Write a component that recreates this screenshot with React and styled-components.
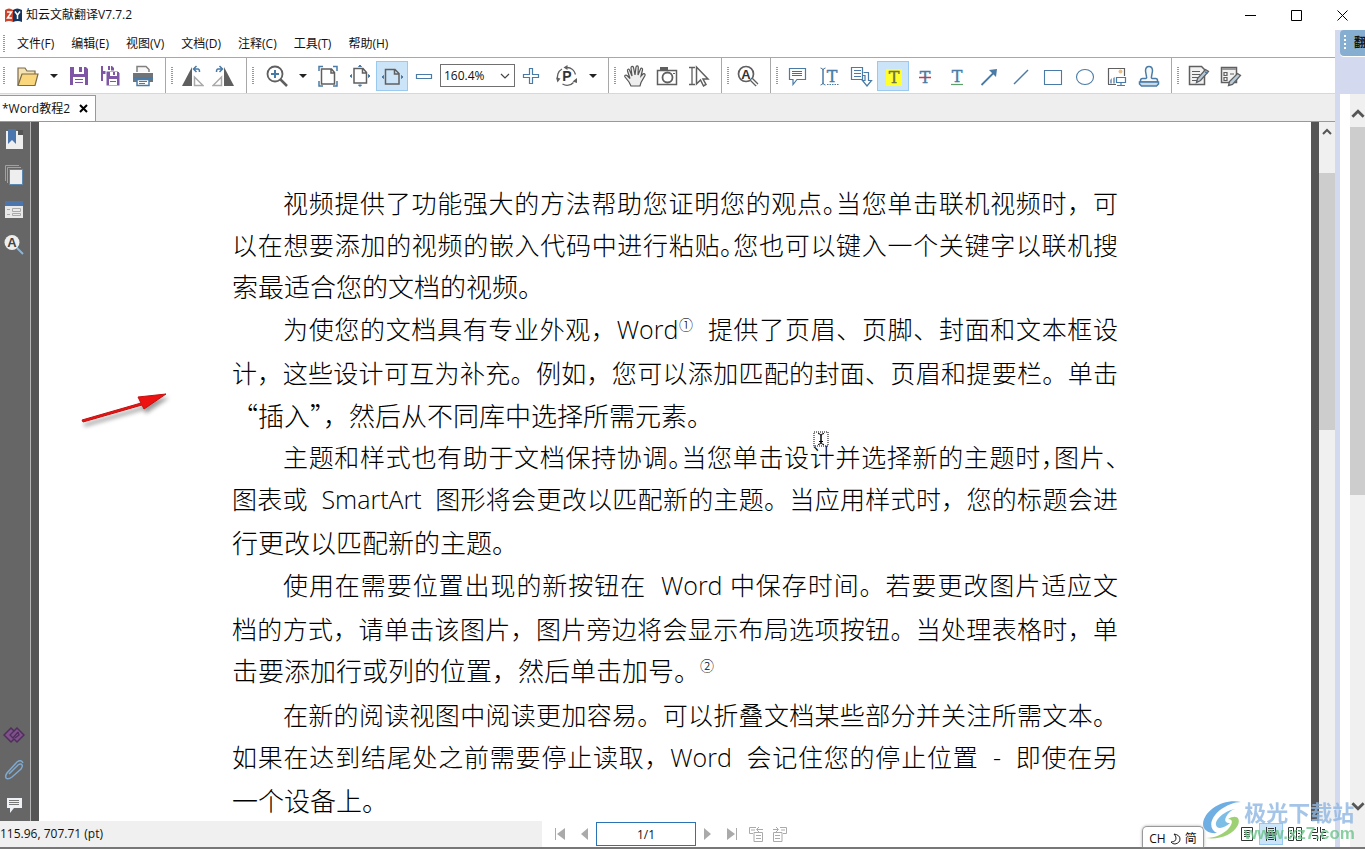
import React, { useState } from "react";
import styled, { createGlobalStyle, css } from "styled-components";

const GRAY = "#5f5f5f";
const BLUE = "#4a7ba6";
const PURPLE = "#7f56a6";

const menus = [
  "文件(F)",
  "编辑(E)",
  "视图(V)",
  "文档(D)",
  "注释(C)",
  "工具(T)",
  "帮助(H)",
];

const Icon = ({ size = 24, children }) => (
  <svg
    width={size}
    height={size}
    viewBox={`0 0 ${size} ${size}`}
    fill="none"
    stroke={GRAY}
    strokeWidth="1.5"
    aria-hidden="true"
  >
    {children}
  </svg>
);

const Letter = ({ x, y, size = 16, color = BLUE, sans, children }) => (
  <text
    x={x}
    y={y}
    fontSize={size}
    fontWeight={sans ? "bold" : "normal"}
    textAnchor="middle"
    fill={color}
    stroke={sans ? "none" : color}
    strokeWidth="0.4"
    fontFamily={sans ? '"Liberation Sans", sans-serif' : '"DejaVu Serif", serif'}
  >
    {children}
  </text>
);

const icons = {
  open: (
    <Icon>
      <path d="M2 21V4h7l2 3h8v3" fill="#f5e3b3" stroke="#7a6a4a" strokeWidth="1.2" />
      <path d="M2 21.500L6 10h16l-3 11.500z" fill="#fad67c" stroke="#7a6a4a" strokeWidth="1.2" />
    </Icon>
  ),
  save: (
    <Icon>
      <path d="M3 3h16l2 2v16H3z" fill={PURPLE} stroke="none" />
      <path d="M7 3h10v7H7zM6 13h12v8H6z" fill="#fff" stroke="none" />
      <path d="M12 3h3v5h-3zM8 15h8v1H8zM8 18h8v1H8z" fill={PURPLE} stroke="none" />
    </Icon>
  ),
  saveAll: (
    <Icon>
      <path d="M2 2h11l2 2v13H2z" fill={PURPLE} stroke="none" />
      <path d="M4 2h8v5H4zM4 10h5v7H4z" fill="#fff" stroke="none" />
      <path d="M9 2h2v4H9z" fill={PURPLE} stroke="none" />
      <path d="M7 7h12l2 2v13H7z" fill={PURPLE} stroke="#fff" strokeWidth="1" />
      <path d="M11 8h7v4h-7zM10 15h8v6h-8z" fill="#fff" stroke="none" />
      <path d="M14 8h2v3h-2zM11 17h6v1h-6z" fill={PURPLE} stroke="none" />
    </Icon>
  ),
  print: (
    <Icon>
      <path d="M6 8V2.500h9l3 3V8" fill="#f7f7f7" stroke="#808080" />
      <path d="M2 9h20v9H2z" fill="#707378" stroke="none" />
      <path d="M2 13h20v2H2z" fill={BLUE} stroke="none" />
      <path d="M6 15.500h12v6H6z" fill="#fff" stroke={BLUE} />
      <path d="M8 17.500h8M8 19.500h6" stroke={BLUE} strokeWidth="1" />
    </Icon>
  ),
  rotateLeft: (
    <Icon>
      <path d="M2 22L12 3v19z" fill={GRAY} stroke="none" />
      <path d="M14.500 13v8.500H23z" stroke="#aaa" />
      <path d="M14 5h4q1.500 0 1.500 3M16.500 2L13.500 5l3 3" stroke={BLUE} />
    </Icon>
  ),
  rotateRight: (
    <Icon>
      <path d="M22 22L12 3v19z" fill={GRAY} stroke="none" />
      <path d="M9.500 13v8.500H1z" stroke="#aaa" />
      <path d="M10 5H6Q4.500 5 4.500 8M7.500 2l3 3-3 3" stroke={BLUE} />
    </Icon>
  ),
  zoom: (
    <Icon>
      <circle cx="10" cy="10" r="7.500" strokeWidth="1.800" />
      <path d="M15.500 15.500L22 22" strokeWidth="2.500" />
      <path d="M10 6v8M6 10h8" stroke={BLUE} strokeWidth="2" />
    </Icon>
  ),
  actualSize: (
    <Icon>
      <path d="M5.500 5h10l3 3.500V20h-13zM15 5v4h4" />
      <path d="M3 7V2.500h4M17 2.500h4V7M21 17v5h-4M7 22H3v-5" stroke={BLUE} />
    </Icon>
  ),
  fitPage: (
    <Icon>
      <path d="M6 4.500h9l3.500 4V19H6zM14.500 5v4H18" />
      <path
        d="M10.500 2.500l1.500-1.500 1.500 1.500zM10.500 21l1.500 1.500 1.500-1.500zM3.500 10.500L2 12l1.500 1.500zM20.500 10.500L22 12l-1.500 1.500z"
        fill={BLUE}
        stroke={BLUE}
        strokeWidth="1"
      />
    </Icon>
  ),
  fitWidth: (
    <Icon>
      <path d="M5.500 5.500h9.500l4 4V20H5.500zM14.500 6v4H19" />
      <path
        d="M3.500 11.500L2 13l1.500 1.500zM21.500 11.500L23 13l-1.500 1.500z"
        fill={BLUE}
        stroke={BLUE}
        strokeWidth="1"
      />
    </Icon>
  ),
  minus: (
    <Icon>
      <path d="M4.500 10.500h15v4h-15z" stroke={BLUE} strokeWidth="1.200" />
    </Icon>
  ),
  plus: (
    <Icon>
      <path
        d="M10.500 4.500h3v6h6v3h-6v6h-3v-6h-6v-3h6z"
        stroke={BLUE}
        strokeWidth="1.200"
      />
    </Icon>
  ),
  rotatePage: (
    <Icon>
      <path d="M12 3.500a9 9 0 0 1 8.500 7M18.500 18.500a9 9 0 0 1-11 1.500M3 16a9 9 0 0 1 4-11" strokeWidth="1.300" />
      <path d="M12.500 1v5L8.500 3.500zM22 14v5l-4.500-1.500zM1 13.500l4.500 1-3 4z" fill={GRAY} stroke="none" />
      <Letter x="12" y="17" size="14" color="#333" sans>
        P
      </Letter>
    </Icon>
  ),
  hand: (
    <Icon>
      <path
        d="M8 22l-2-4-4-5c-1-1.500 1-2.500 2-1.500l3 3L4.500 7c-.5-2 1.500-2.500 2-1l2.500 6-1-8c0-2 2-2 2.500-.5L12 11l1-8c.3-1.600 2.300-1.500 2.300.3L15 11l2.500-6c.7-1.500 2.500-.8 2 1L18 12l2-2c1-1 2.500 0 2 1.500l-4 7-1 3.500z"
        fill="#eee"
        stroke="#555"
        strokeWidth="1.200"
      />
    </Icon>
  ),
  camera: (
    <Icon>
      <path d="M2.500 6.500h19v14h-19z" />
      <path d="M5 3h8v4H5zM18 9h2v1h-2z" fill={GRAY} stroke="none" />
      <circle cx="12.500" cy="13.500" r="5" strokeWidth="1.800" />
    </Icon>
  ),
  select: (
    <Icon>
      <path d="M2 3.500h6M5 4v16M2 20.500h6" strokeWidth="1.300" />
      <path d="M9.500 3v17l4-4 3 6 2.500-1.500-3-5.500h5z" fill="#fff" />
    </Icon>
  ),
  find: (
    <Icon>
      <circle cx="10" cy="10" r="7.500" strokeWidth="1.700" />
      <path d="M15.500 15.500L21 21" strokeWidth="4" />
      <path d="M15.500 15.500L21 21" stroke="#fff" strokeWidth="1.500" />
      <Letter x="10" y="15" size="13" color="#333" sans>
        A
      </Letter>
    </Icon>
  ),
  comment: (
    <Icon>
      <path d="M4.500 4.500h16v11H12l-4 5v-5H4.500z" stroke={BLUE} strokeWidth="1.200" />
      <path d="M7 7.500h10M7 9.500h10M7 11.500h10" stroke="#666" strokeWidth="1" />
    </Icon>
  ),
  textInsert: (
    <Icon>
      <path
        d="M3.500 4q2.500 0 2.500 3v11q0 3-2.500 3M8.500 4Q6 4 6 7v11q0 3 2.500 3"
        stroke={BLUE}
        strokeWidth="1"
      />
      <Letter x="15" y="18">
        T
      </Letter>
      <path d="M10 20.500h12" stroke={BLUE} strokeWidth="1.200" strokeDasharray="1.500 1" />
    </Icon>
  ),
  replace: (
    <Icon>
      <path d="M2.500 3.500h11v12h-11z" stroke={BLUE} strokeWidth="1.200" />
      <path d="M5 6.500h7M5 9.500h7M5 12.500h7" stroke={BLUE} strokeWidth="1" />
      <path
        d="M14.500 8.500h5v8h3L18 22l-4.500-5.500H16v-5h-2"
        fill="#fff"
        stroke={BLUE}
        strokeWidth="1.200"
      />
    </Icon>
  ),
  highlight: (
    <Icon>
      <path d="M5 5h16v17H5z" fill="#ffff2e" stroke="none" />
      <Letter x="13" y="19" color="#6e7047">
        T
      </Letter>
    </Icon>
  ),
  strike: (
    <Icon>
      <Letter x="12" y="19">
        T
      </Letter>
      <path d="M6 13.500h12" stroke="#d0354c" />
    </Icon>
  ),
  underline: (
    <Icon>
      <Letter x="12" y="18">
        T
      </Letter>
      <path d="M6 20.500h12" stroke="#5fa06a" strokeWidth="1.200" />
    </Icon>
  ),
  arrow: (
    <Icon>
      <path d="M4.500 21L17 8.500" stroke={BLUE} strokeWidth="1.800" />
      <path d="M12 6l8-1-1 8z" fill={BLUE} stroke="none" />
    </Icon>
  ),
  line: (
    <Icon>
      <path d="M5 20L19 6" stroke={BLUE} strokeWidth="1.500" />
    </Icon>
  ),
  rect: (
    <Icon>
      <path d="M3.500 6.500h17v14h-17z" stroke={BLUE} strokeWidth="1.100" />
    </Icon>
  ),
  ellipse: (
    <Icon>
      <ellipse cx="12" cy="13" rx="8.500" ry="7.500" stroke={BLUE} strokeWidth="1.100" />
    </Icon>
  ),
  image: (
    <Icon>
      <path d="M3.500 20V4.500h16V12M3 20.500h8" strokeWidth="1.200" />
      <circle cx="15.500" cy="7.500" r="2" fill="#e8bf85" stroke="none" />
      <path d="M5 19.500V16l2-2v5.500zM8 19.500V14l2-1v6.500z" fill="#8fa9c4" stroke="none" />
      <path d="M11.500 13.500h9v5h-9zM16 18.500v3M12 21.500h8" fill="#fff" stroke={BLUE} strokeWidth="1.200" />
    </Icon>
  ),
  stamp: (
    <Icon>
      <path
        d="M3.500 18v-1.500q0-2 2-2h3q1.500 0 1-2Q9 10 8.500 7q0-4.500 3.500-4.500T15.500 7q-.5 3-1 5.500-.5 2 1 2h3q2 0 2 2V18z"
        fill="#f4f8fb"
        stroke={BLUE}
      />
      <path d="M2.500 18h19v2l-2 2h-15l-2-2z" fill="#c9dbe8" stroke={BLUE} />
    </Icon>
  ),
  editPage: (
    <Icon>
      <path d="M3.500 2.500h12l3 3v15h-15z" fill="#f2f2f2" />
      <path d="M6 7.500h8M6 10.500h8M6 13.500h6M6 16.500h5" strokeWidth="1" />
      <path d="M10.500 18.500l1-4 8-9 3 2-8 9z" fill="#b9cbdb" strokeWidth="1.300" />
      <path d="M19 8l3 1" stroke={BLUE} />
    </Icon>
  ),
  editForm: (
    <Icon>
      <path d="M3.500 3.500h15v15h-15z" fill="#f2f2f2" />
      <path d="M4 4h14v2H4z" fill="#999" stroke="none" />
      <path d="M6 8.500h3v3H6zM6 13.500h3v3H6zM12 10h4" strokeWidth="1.200" />
      <path d="M10.500 21.500l1-4 8-8 3 2-8 9z" fill="#b9cbdb" strokeWidth="1.300" />
    </Icon>
  ),
};

const annotationTools = [
  ["comment", "附注"],
  ["textInsert", "插入文本"],
  ["replace", "替换文本"],
  ["highlight", "高亮"],
  ["strike", "删除线"],
  ["underline", "下划线"],
  ["arrow", "箭头"],
  ["line", "直线"],
  ["rect", "矩形"],
  ["ellipse", "椭圆"],
  ["image", "图像"],
  ["stamp", "图章"],
];

const sideIcons = {
  bookmark: (
    <Icon size={22}>
      <path d="M3 2h13l4 4v14H3z" fill="#eee" stroke="none" />
      <path d="M15 1h5v5h-5z" fill="#555" stroke="none" />
      <path d="M5 0h8v15l-4-4-4 4z" fill="#4a76ad" stroke="none" />
    </Icon>
  ),
  pages: (
    <Icon size={22}>
      <path d="M2.500 17V1.500H16M4.500 19V3.500H18" stroke="#85a8c6" strokeWidth="1" />
      <path d="M6.500 5.500h13v15h-13z" fill="#eee" stroke="#5c87ae" strokeWidth="1" />
    </Icon>
  ),
  form: (
    <Icon size={22}>
      <path d="M2 6h18v13H2z" fill="#e9e9e9" stroke="none" />
      <path d="M2 2h18v5H2z" fill="#4a76ad" stroke="none" />
      <path d="M4 10.500h3M4 15.500h3M9.500 9.500h8v3h-8zM9.500 14.500h8v2h-8z" stroke="#aaa" strokeWidth="1" />
    </Icon>
  ),
  search: (
    <Icon size={22}>
      <path d="M14 14l6 6" stroke="#8fb4d4" strokeWidth="2" />
      <circle cx="9" cy="8.500" r="7.500" fill="#eee" stroke="none" />
      <Letter x="9" y="13" size="13" color="#444" sans>
        A
      </Letter>
    </Icon>
  ),
  link: (
    <Icon size={22}>
      <path
        d="M8 5L1 12l7 7 3-3 3 3 7-7-7-7-3 3z"
        fill="#80528a"
        stroke="#4f2d5d"
      />
      <path d="M11 8l-4 4 3 3 5-6M15 9l1 3-4 3" stroke="#4f2d5d" strokeWidth="1.300" />
    </Icon>
  ),
  clip: (
    <Icon size={22}>
      <path
        d="M6 16l9-9q3-2 4 0 1 1-1 4l-9 8q-4 3-6 1-1-2 1-5L14 4q4-3 6 1"
        stroke="#7fa9cf"
        strokeWidth="1.500"
      />
    </Icon>
  ),
  note: (
    <Icon size={22}>
      <path d="M4 5h15v10h-8l-4 5v-5H4z" fill="#eef2f6" stroke="none" />
      <path d="M6 7.500h10M6 9.500h10M6 11.500h10" stroke="#777" strokeWidth="1" />
    </Icon>
  ),
};

const AppLogo = () => (
  <svg width="17" height="14" viewBox="0 0 17 14" aria-hidden="true">
    <path d="M0 2Q4-1 8 2v12q-4-2-8 0z" fill="#cf432b" />
    <path d="M8 2q4-3 9 0v12q-4-2-9 0z" fill="#17365f" />
    <path d="M2 4h4.500L2.500 10H7M10 3.500l2.500 3.500v4M15 3.500L12.500 7" fill="none" stroke="#fff" strokeWidth="1.500" />
  </svg>
);

const Chevron = ({ down, size = 10, color = "#555" }) => (
  <svg width={size} height={size} viewBox="0 0 10 10" aria-hidden="true">
    <path
      d={down ? "M1 3l4 4 4-4" : "M1 7l4-4 4 4"}
      fill="none"
      stroke={color}
      strokeWidth="2"
    />
  </svg>
);

const ToolGroup = ({ wide, first, last, children }) => (
  <Group $first={first} $last={last}>
    <Grip $wide={wide} />
    {children}
  </Group>
);

const Tool = ({ name, label, active, onClick }) => (
  <ToolButton type="button" aria-label={label} $active={active} onClick={onClick}>
    {icons[name]}
  </ToolButton>
);

const DropArrow = ({ label }) => (
  <Drop type="button" aria-label={label}>
    <svg width="8" height="4" viewBox="0 0 8 4" aria-hidden="true">
      <path d="M0 0h8L4 4z" fill="#222" />
    </svg>
  </Drop>
);

const Watermark = () => (
  <Mark>
    <svg width="42" height="40" viewBox="0 0 42 40" aria-hidden="true">
      <path d="M39 2C22-2 2 10 1 24c0 6 6 10 14 9C6 29 8 18 18 10 25 5 32 2 39 2z" fill="#4b9bdc" />
      <path d="M33 9C25 10 13 18 14 25c1 5 9 3 14-2-4 0-6-2-4-6 2-4 5-7 9-8z" fill="#5caee0" />
      <path d="M4 38c13 2 27-3 32-13 3-7-2-11-10-6 5 0 5 4 1 9C22 34 13 38 4 38z" fill="#86c552" />
    </svg>
    <div>
      <MarkName>极光下载站</MarkName>
      <MarkUrl>www.xz7.com</MarkUrl>
    </div>
  </Mark>
);

const App = () => {
  const [tool, setTool] = useState("highlight");
  const [layout, setLayout] = useState("continuous");

  return (
    <Window>
      <GlobalStyle />
      <TitleBar>
        <AppLogo />
        <Title>知云文献翻译V7.7.2</Title>
        <WindowButton type="button" aria-label="最小化">
          <svg width="11" height="11" viewBox="0 0 11 11">
            <path d="M0 5.500h11" stroke="#000" />
          </svg>
        </WindowButton>
        <WindowButton type="button" aria-label="最大化">
          <svg width="11" height="11" viewBox="0 0 11 11">
            <path d="M.5.500h10v10H.5z" stroke="#000" fill="none" />
          </svg>
        </WindowButton>
        <WindowButton type="button" aria-label="关闭">
          <svg width="11" height="11" viewBox="0 0 11 11">
            <path d="M.5.500l10 10M10.500.500l-10 10" stroke="#000" />
          </svg>
        </WindowButton>
      </TitleBar>

      <Body>
        <Reader>
          <MenuBar>
            <Grip />
            {menus.map((menu) => (
              <MenuButton type="button" key={menu}>
                {menu}
              </MenuButton>
            ))}
          </MenuBar>

          <Toolbar>
            <ToolGroup first wide>
              <Tool name="open" label="打开" />
              <DropArrow label="最近文件" />
              <Tool name="save" label="保存" />
              <Tool name="saveAll" label="全部保存" />
              <Tool name="print" label="打印" />
            </ToolGroup>
            <ToolGroup>
              <Tool name="rotateLeft" label="向左旋转" />
              <Tool name="rotateRight" label="向右旋转" />
            </ToolGroup>
            <ToolGroup wide>
              <Tool name="zoom" label="放大镜" />
              <DropArrow label="缩放工具" />
              <Tool name="actualSize" label="实际大小" />
              <Tool name="fitPage" label="适合页面" />
              <Tool name="fitWidth" label="适合宽度" active />
              <Tool name="minus" label="缩小" />
              <ZoomBox>
                <ZoomSelect aria-label="缩放比例" defaultValue="160.4%">
                  <option>160.4%</option>
                  <option>100%</option>
                </ZoomSelect>
                <svg width="10" height="6" viewBox="0 0 10 6" aria-hidden="true">
                  <path d="M1 1l4 4 4-4" fill="none" stroke="#444" strokeWidth="1.200" />
                </svg>
              </ZoomBox>
              <Tool name="plus" label="放大" />
              <Spacer />
              <Tool name="rotatePage" label="旋转页面" />
              <DropArrow label="旋转选项" />
            </ToolGroup>
            <ToolGroup>
              <Tool name="hand" label="手型工具" />
              <Tool name="camera" label="快照" />
              <Tool name="select" label="选择文本" />
            </ToolGroup>
            <ToolGroup>
              <Tool name="find" label="查找" />
            </ToolGroup>
            <ToolGroup>
              {annotationTools.map(([name, label]) => (
                <Tool
                  key={name}
                  name={name}
                  label={label}
                  active={tool === name}
                  onClick={() => setTool(name)}
                />
              ))}
            </ToolGroup>
            <ToolGroup last>
              <Tool name="editPage" label="编辑内容" />
              <Tool name="editForm" label="编辑表单" />
            </ToolGroup>
          </Toolbar>

          <TabStrip>
            <Tab>
              <span>*Word教程2</span>
              <TabClose type="button" aria-label="关闭标签">
                <svg width="9" height="9" viewBox="0 0 9 9">
                  <path d="M1 1l7 7M8 1L1 8" stroke="#000" strokeWidth="2" />
                </svg>
              </TabClose>
            </Tab>
          </TabStrip>

          <Workspace>
            <SideBar>
              <SideButton type="button" aria-label="书签">{sideIcons.bookmark}</SideButton>
              <SideButton type="button" aria-label="缩略图">{sideIcons.pages}</SideButton>
              <SideButton type="button" aria-label="表单域">{sideIcons.form}</SideButton>
              <SideButton type="button" aria-label="搜索">{sideIcons.search}</SideButton>
              <SideFill />
              <SideButton type="button" aria-label="链接">{sideIcons.link}</SideButton>
              <SideButton type="button" aria-label="附件">{sideIcons.clip}</SideButton>
              <SideButton type="button" aria-label="注释">{sideIcons.note}</SideButton>
            </SideBar>

            <Canvas>
              <Page>
                <Line $indent>
                  视频提供了功能强大的方法帮助您证明您的观点<Half>。</Half>当您单击联机视频时，可
                </Line>
                <Line>
                  以在想要添加的视频的嵌入代码中进行粘贴<Half>。</Half>您也可以键入一个关键字以联机搜
                </Line>
                <LastLine>索最适合您的文档的视频。</LastLine>
                <Line $indent $latin>
                  为使您的文档具有专业外观，Word<Note>①</Note>&nbsp;&nbsp;提供了页眉、页脚、封面和文本框设
                </Line>
                <Line>计，这些设计可互为补充。例如，您可以添加匹配的封面、页眉和提要栏。单击</Line>
                <LastLine>
                  <Cjk>“</Cjk>插入<Cjk>”，</Cjk>然后从不同库中选择所需元素。
                </LastLine>
                <Line $indent>
                  主题和样式也有助于文档保持协调<Half>。</Half>当您单击设计并选择新的主题时
                  <Half>，</Half>图片<Half>、</Half>
                </Line>
                <Line $latin>
                  图表或&nbsp;&nbsp;SmartArt&nbsp;&nbsp;图形将会更改以匹配新的主题。当应用样式时，您的标题会进
                </Line>
                <LastLine>行更改以匹配新的主题。</LastLine>
                <Line $indent $latin>
                  使用在需要位置出现的新按钮在&nbsp;&nbsp;Word&nbsp;中保存时间。若要更改图片适应文
                </Line>
                <Line>档的方式，请单击该图片，图片旁边将会显示布局选项按钮。当处理表格时，单</Line>
                <LastLine $latin>
                  击要添加行或列的位置，然后单击加号。<Note>②</Note>
                </LastLine>
                <Line $indent>在新的阅读视图中阅读更加容易。可以折叠文档某些部分并关注所需文本。</Line>
                <Line $latin>
                  如果在达到结尾处之前需要停止读取，Word&nbsp;&nbsp;会记住您的停止位置&nbsp;&nbsp;-&nbsp;&nbsp;即使在另
                </Line>
                <LastLine>一个设备上。</LastLine>
              </Page>
              <RedArrow width="94" height="40" viewBox="0 0 94 40" aria-hidden="true">
                <path d="M4 29l59-17-3-6 28-3-22 15-2-4L5 31z" fill="#ee1111" stroke="#c01010" strokeWidth="1" />
              </RedArrow>
              <Cursor width="16" height="16" viewBox="0 0 16 16" aria-hidden="true">
                <path d="M1 1h14v14H1z" fill="none" stroke="#000" strokeDasharray="1 1" />
                <path d="M5 2.500q3 0 3 2.500v6q0 2.500-3 2.500M11 2.500q-3 0-3 2.500v6q0 2.500 3 2.500M6 10.500h4" fill="none" stroke="#000" />
              </Cursor>
            </Canvas>

            <ScrollTrack>
              <ScrollCap>
                <Chevron />
              </ScrollCap>
              <ScrollSpace $size={32} />
              <ScrollThumb $size={257} />
              <ScrollSpace $size={390} />
            </ScrollTrack>
          </Workspace>

          <StatusBar>
            <Position>115.96, 707.71 (pt)</Position>
            <Pager>
              <PagerButton type="button" aria-label="第一页">
                <svg width="12" height="14" viewBox="0 0 12 14">
                  <path d="M1 1h1v12H1zM11 1v12L3 7z" fill="#aaa" />
                </svg>
              </PagerButton>
              <PagerButton type="button" aria-label="上一页">
                <svg width="12" height="14" viewBox="0 0 12 14">
                  <path d="M10 1v12L3 7z" fill="#aaa" />
                </svg>
              </PagerButton>
              <PageInput aria-label="页码" defaultValue="1/1" />
              <PagerButton type="button" aria-label="下一页">
                <svg width="12" height="14" viewBox="0 0 12 14">
                  <path d="M2 1v12l7-6z" fill="#aaa" />
                </svg>
              </PagerButton>
              <PagerButton type="button" aria-label="最后一页">
                <svg width="12" height="14" viewBox="0 0 12 14">
                  <path d="M10 1h1v12h-1zM1 1v12l8-6z" fill="#aaa" />
                </svg>
              </PagerButton>
              <PagerButton type="button" aria-label="上一视图">
                <svg width="16" height="16" viewBox="0 0 16 16" fill="none" stroke="#aaa">
                  <path d="M6 6.500h8.500v9H6zM8 9.500h5M8 12.500h5M8 1.500H1.500v6H5M3 4h4M15 3.500H9M11 1L8.500 3.500 11 6" />
                </svg>
              </PagerButton>
              <PagerButton type="button" aria-label="下一视图">
                <svg width="16" height="16" viewBox="0 0 16 16" fill="none" stroke="#aaa">
                  <path d="M1.500 6.500H10v9H1.500zM3 9.500h5M3 12.500h5M8 1.500h6.500v6H11M9 4h4M1 3.500h5M4 1l2.500 2.500L4 6" />
                </svg>
              </PagerButton>
            </Pager>
            <InputMethod>
              CH
              <svg width="11" height="12" viewBox="0 0 11 12" aria-hidden="true">
                <path d="M4 1q6 1 6 5t-5 5q-3 0-4-2 5 0 5-4 0-2-2-4z" fill="none" stroke="#222" />
              </svg>
              简
            </InputMethod>
            <Views>
              <ViewButton type="button" aria-label="单页" $active={layout === "single"} onClick={() => setLayout("single")}>
                <svg width="12" height="14" viewBox="0 0 12 14" fill="none" stroke="#333">
                  <path d="M.5.500h11v13H.5zM3 3.500h6M3 5.500h6M3 7.500h6M3 9.500h6" />
                </svg>
              </ViewButton>
              <ViewButton type="button" aria-label="连续" $active={layout === "continuous"} onClick={() => setLayout("continuous")}>
                <svg width="12" height="14" viewBox="0 0 12 14" fill="none" stroke="#333">
                  <path d="M1.500 0v5.500h9V0M3 1.500h6M3 3.500h6M1.500 14V8.500h9V14M3 10.500h6M3 12.500h6M0 7h12" />
                </svg>
              </ViewButton>
              <ViewButton type="button" aria-label="双页" $active={layout === "facing"} onClick={() => setLayout("facing")}>
                <svg width="14" height="14" viewBox="0 0 14 14" fill="none" stroke="#333">
                  <path d="M.5.500h5v13h-5zM8.500.500h5v13h-5zM2 3.500h2M2 6.500h2M2 9.500h2M10 3.500h2M10 6.500h2M10 9.500h2" />
                </svg>
              </ViewButton>
              <ViewButton type="button" aria-label="双页连续" $active={layout === "book"} onClick={() => setLayout("book")}>
                <svg width="14" height="14" viewBox="0 0 14 14" fill="none" stroke="#333">
                  <path d="M0 5.500h5.500V0M14 5.500H8.500V0M0 8.500h5.500V14M14 8.500H8.500V14M1 2.500h3M10 2.500h3M1 11.500h3M10 11.500h3" />
                </svg>
              </ViewButton>
            </Views>
          </StatusBar>
        </Reader>

        <TranslatePanel>
          <PanelTab>
            <PanelGrip />
            <span>翻</span>
          </PanelTab>
          <PanelBody>
            <PanelScroll>
              <PanelCap>
                <Chevron size={14} />
              </PanelCap>
              <ScrollThumb $size={369} />
              <ScrollSpace $size={304} />
              <PanelCap>
                <Chevron down size={14} />
              </PanelCap>
            </PanelScroll>
          </PanelBody>
        </TranslatePanel>
      </Body>
      <Watermark />
    </Window>
  );
};

export default App;

const GlobalStyle = createGlobalStyle`
  * {
    box-sizing: border-box;
  }
  body {
    margin: 0;
    overflow: hidden;
    color: #111;
    font: 12px/16px "Open Sans", "Noto Sans CJK SC", sans-serif;
  }
  button, input, select {
    font: inherit;
    color: inherit;
  }
  button {
    padding: 0;
    border: none;
    background: none;
  }
  svg {
    display: block;
    flex: none;
  }
`;

const Window = styled.div`
  position: relative;
  display: flex;
  flex-direction: column;
  height: 100vh;
  background-color: white;
  border-bottom: 2px solid #777;
`;

const TitleBar = styled.header`
  display: flex;
  align-items: center;
  height: 30px;
  padding-left: 5px;
  flex: none;
`;

const Title = styled.div`
  flex: 1;
  padding-left: 4px;
`;

const WindowButton = styled.button`
  display: grid;
  place-items: center;
  width: 46px;
  height: 28px;
`;

const Body = styled.div`
  display: flex;
  flex: 1;
  min-height: 0;
`;

const Reader = styled.main`
  display: flex;
  flex-direction: column;
  flex: 1;
  min-width: 0;
`;

const MenuBar = styled.nav`
  display: flex;
  align-items: center;
  gap: 1px;
  height: 28px;
  padding-left: 3px;
  border-bottom: 1px solid #a8a8a8;
  flex: none;
`;

const MenuButton = styled.button`
  padding: 0 8px;
`;

const Grip = styled.span`
  width: 2px;
  height: 18px;
  margin-right: ${(props) => (props.$wide ? 7 : 3)}px;
  flex: none;
  background: repeating-linear-gradient(#999 0 1px, white 1px 2px);
`;

const Toolbar = styled.div`
  display: flex;
  height: 36px;
  border-bottom: 1px solid #d8d8d8;
  flex: none;
`;

const Group = styled.div`
  display: flex;
  align-items: center;
  padding: 0 6px 0 ${(props) => (props.$first ? 3 : 5)}px;
  border-right: ${(props) => (props.$last ? "none" : "1px solid #a8a8a8")};
`;

const activeStyle = css`
  background-color: #cce4f7;
  box-shadow: inset 0 0 0 1px #99c9ef;
`;

const ToolButton = styled.button`
  display: grid;
  place-items: center;
  width: 32px;
  height: 30px;
  ${(props) => props.$active && activeStyle}
`;

const Drop = styled.button`
  display: grid;
  place-items: center;
  width: 19px;
  height: 30px;
`;

const Spacer = styled.span`
  width: 4px;
`;

const ZoomBox = styled.div`
  display: flex;
  align-items: center;
  width: 75px;
  height: 23px;
  padding-right: 4px;
  border: 1px solid #707070;
`;

const ZoomSelect = styled.select`
  flex: 1;
  min-width: 0;
  padding: 0 0 0 3px;
  border: none;
  background: none;
  appearance: none;
`;

const TabStrip = styled.div`
  display: flex;
  align-items: flex-end;
  height: 28px;
  background-color: #eee;
  border-bottom: 1px solid #999;
  flex: none;
`;

const Tab = styled.div`
  display: flex;
  align-items: center;
  gap: 9px;
  height: 26px;
  padding: 0 7px 0 2px;
  background-color: white;
  border-top: 1px solid #999;
  border-right: 1px solid #999;
`;

const TabClose = styled.button`
  display: block;
`;

const Workspace = styled.div`
  display: flex;
  flex: 1;
  min-height: 0;
`;

const SideBar = styled.div`
  display: flex;
  flex-direction: column;
  width: 31px;
  background-color: #666;
  border-right: 1px solid #b4b4b4;
`;

const SideButton = styled.button`
  display: grid;
  place-items: center;
  width: 28px;
  height: 35px;
  flex: none;
`;

const SideFill = styled.div`
  flex: 1;
`;

const Canvas = styled.div`
  position: relative;
  flex: 1;
  min-width: 0;
  padding: 0 8px;
  overflow: hidden;
  background-color: #555;
`;

const Page = styled.article`
  min-height: 100%;
  padding: 60px 193px 0;
  background-color: white;
  color: #000;
  font-family: "Open Sans", "Noto Sans CJK SC", sans-serif;
  font-weight: 300;
`;

const Line = styled.div`
  padding-left: ${(props) => (props.$indent ? 51 : 0)}px;
  padding-bottom: ${(props) => (props.$latin ? 2 : 0)}px;
  height: ${(props) => (props.$latin ? 44 : 42)}px;
  font-size: 25px;
  line-height: 42px;
  white-space: nowrap;
  text-align: justify;
  text-align-last: justify;
`;

const LastLine = styled(Line)`
  font-size: 26px;
  text-align: left;
  text-align-last: left;
`;

const Half = styled.span`
  font-feature-settings: "halt";
`;

const Cjk = styled.span`
  font-family: "Noto Sans CJK SC", sans-serif;
`;

const Note = styled.sup`
  font-family: "Noto Sans CJK SC", sans-serif;
  font-size: 14px;
  line-height: 0;
`;

const RedArrow = styled.svg`
  position: absolute;
  top: 269px;
  left: 47px;
  filter: drop-shadow(2px 4px 2px rgba(0, 0, 0, 0.4));
`;

const Cursor = styled.svg`
  position: absolute;
  top: 309px;
  left: 782px;
`;

const ScrollTrack = styled.div`
  display: flex;
  flex-direction: column;
  width: 16px;
  background-color: #f0f0f0;
`;

const ScrollCap = styled.div`
  display: grid;
  place-items: center;
  height: 19px;
  flex: none;
`;

const ScrollThumb = styled.div`
  flex: ${(props) => props.$size} 1 0;
  background-color: #cdcdcd;
`;

const ScrollSpace = styled.div`
  flex: ${(props) => props.$size} 1 0;
`;

const StatusBar = styled.footer`
  display: flex;
  height: 26px;
  flex: none;
`;

const Position = styled.div`
  flex: 0 1 542px;
  line-height: 26px;
  background-color: #f0f0f0;
`;

const Pager = styled.div`
  display: flex;
  align-items: center;
  flex: 1;
  padding-left: 6px;
`;

const PagerButton = styled.button`
  display: grid;
  place-items: center;
  width: 24px;
  height: 24px;
`;

const PageInput = styled.input`
  width: 100px;
  height: 24px;
  border: 1px solid #2a73b5;
  text-align: center;
`;

const InputMethod = styled.div`
  display: flex;
  align-items: center;
  justify-content: center;
  gap: 4px;
  align-self: flex-end;
  width: 62px;
  height: 21px;
  padding-top: 4px;
  margin-right: 31px;
  border: 1px solid #999;
  border-bottom: none;
  border-radius: 5px 5px 0 0;
  box-shadow: 0 0 3px #aaa;
  white-space: nowrap;
`;

const Views = styled.div`
  display: flex;
  align-items: center;
  padding-right: 4px;
`;

const ViewButton = styled.button`
  display: grid;
  place-items: center;
  width: 24px;
  height: 22px;
  ${(props) => props.$active && activeStyle}
`;

const TranslatePanel = styled.aside`
  display: flex;
  flex-direction: column;
  width: 30px;
  padding-left: 5px;
  background-color: #d3d9ee;
  overflow: hidden;
`;

const PanelTab = styled.div`
  display: flex;
  align-items: center;
  gap: 8px;
  height: 26px;
  margin-bottom: 38px;
  padding-left: 4px;
  border-radius: 4px 0 0 4px;
  background-color: #86aed0;
  box-shadow: 0 1px 0 white;
  font-weight: bold;
  white-space: nowrap;
  overflow: hidden;
  flex: none;
`;

const PanelGrip = styled.span`
  width: 2px;
  height: 16px;
  flex: none;
  background: repeating-linear-gradient(white 0 2px, transparent 2px 4px);
`;

const PanelBody = styled.div`
  display: flex;
  flex: 1;
  padding-left: 10px;
  background-color: white;
`;

const PanelScroll = styled.div`
  display: flex;
  flex-direction: column;
  flex: 1;
  background-color: #f0f0f0;
`;

const PanelCap = styled.div`
  display: grid;
  place-items: center;
  height: 33px;
  padding-top: 6px;
  flex: none;
  &:last-child {
    height: 48px;
    place-items: start center;
    padding-top: 0;
  }
`;

const Mark = styled.div`
  position: absolute;
  right: 10px;
  bottom: 4px;
  display: flex;
  align-items: center;
  opacity: 0.8;
  pointer-events: none;
  white-space: nowrap;
`;

const MarkName = styled.div`
  font: bold 22px/28px "Noto Sans CJK SC", sans-serif;
  color: #8fb7e3;
`;

const MarkUrl = styled.div`
  font: bold 17px/18px "Liberation Sans", sans-serif;
  color: #6cc48a;
`;
